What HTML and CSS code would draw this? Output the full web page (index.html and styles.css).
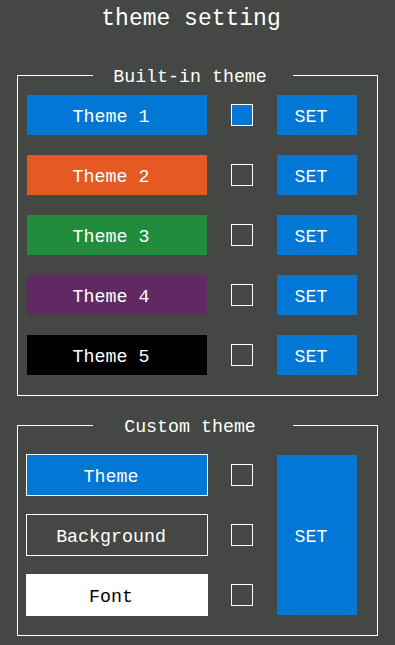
FILE: index.html
```html
<!DOCTYPE html>
<html lang="en">
<head>
    <meta charset="UTF-8">
    <meta name="viewport" content="width=device-width, initial-scale=1.0">
    <title>theme setting</title>
    <link rel="stylesheet" href="styles.css">
</head>
<body>
    <h1 class="title">theme setting</h1>

    <fieldset class="group">
        <legend>Built-in theme</legend>
        <div class="rows">
            <div class="theme blue">Theme 1</div>
            <div class="check checked"></div>
            <div class="set">SET</div>

            <div class="theme orange">Theme 2</div>
            <div class="check"></div>
            <div class="set">SET</div>

            <div class="theme green">Theme 3</div>
            <div class="check"></div>
            <div class="set">SET</div>

            <div class="theme purple">Theme 4</div>
            <div class="check"></div>
            <div class="set">SET</div>

            <div class="theme black">Theme 5</div>
            <div class="check"></div>
            <div class="set">SET</div>
        </div>
    </fieldset>

    <fieldset class="group custom">
        <legend>Custom theme</legend>
        <div class="rows">
            <div class="theme blue outlined">Theme</div>
            <div class="check"></div>
            <div class="set tall">SET</div>

            <div class="theme outlined">Background</div>
            <div class="check"></div>

            <div class="theme white outlined">Font</div>
            <div class="check"></div>
        </div>
    </fieldset>
</body>
</html>
```

FILE: styles.css
```css
* {
    margin: 0;
    padding: 0;
    box-sizing: border-box;
}
body {
    background: #454744;
    color: #fff;
    font-family: "Liberation Mono", "DejaVu Sans Mono", monospace;
    width: 395px;
}
.title {
    font-size: 23px;
    font-weight: normal;
    line-height: 30px;
    padding: 4px 13px 0 0;
    margin-bottom: 29px;
    text-align: center;
}
.group {
    margin: 0 17px;
    width: 361px;
    border: 1px solid #fff;
    padding: 8px 18px 20px 9px;
}
.group legend {
    width: 200px;
    margin: 0 auto;
    padding: 4px 6px 0 0;
    font-size: 18.3px;
    line-height: 20px;
    text-align: center;
}
.custom {
    margin-top: 17px;
    padding-top: 18px;
}
.rows {
    display: grid;
    grid-template-columns: 180px 22px 80px;
    grid-auto-rows: 40px;
    column-gap: 24px;
    row-gap: 20px;
    align-items: center;
}
.theme, .set {
    height: 40px;
    display: flex;
    align-items: center;
    justify-content: center;
    font-size: 18.3px;
    padding: 4px 12px 0 0;
}
.set {
    background: #0277d6;
}
.set.tall {
    grid-row: span 3;
    height: 160px;
}
.check {
    width: 22px;
    height: 22px;
    border: 1px solid #fff;
}
.check.checked {
    background: #0277d6;
}
.blue { background: #0277d6; }
.orange { background: #e55a23; }
.green { background: #218d3c; }
.purple { background: #612863; }
.black { background: #000; }
.white {
    background: #fff;
    color: #000;
}
.outlined {
    outline: 1px solid #fff;
}
```
